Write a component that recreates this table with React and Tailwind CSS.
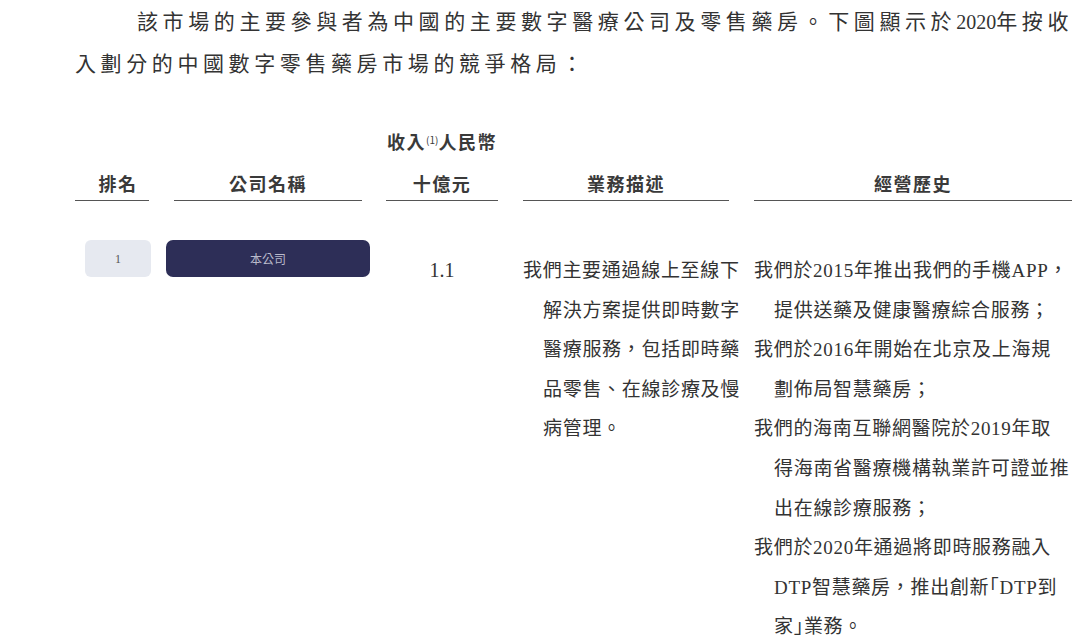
const serif = "font-['Liberation_Serif','Noto_Sans_CJK_TC',serif]";
const sans = "font-['Noto_Sans_CJK_TC','Noto_Sans',sans-serif]";

const Num = ({ children }) => (
  <span className="font-['Liberation_Serif',serif] text-[20px] tracking-normal">{children}</span>
);

// half-width corner bracket, like the printed original
const Br = ({ children }) => (
  <span className="[font-feature-settings:'halt']">{children}</span>
);

const descLines = [
  "我們主要通過線上至線下",
  "解決方案提供即時數字",
  "醫療服務，包括即時藥",
  "品零售、在線診療及慢",
  "病管理。",
];

const historyLines = [
  { text: "我們於2015年推出我們的手機APP，", indent: false },
  { text: "提供送藥及健康醫療綜合服務；", indent: true },
  { text: "我們於2016年開始在北京及上海規", indent: false },
  { text: "劃佈局智慧藥房；", indent: true },
  { text: "我們的海南互聯網醫院於2019年取", indent: false },
  { text: "得海南省醫療機構執業許可證並推", indent: true },
  { text: "出在線診療服務；", indent: true },
  { text: "我們於2020年通過將即時服務融入", indent: false },
  { text: <>DTP智慧藥房，推出創新<Br>「</Br>DTP到</>, indent: true },
  { text: <>家<Br>」</Br>業務。</>, indent: true },
];

const HeadCell = ({ width, className = "", children }) => (
  <div className={`${width} ${className} border-b-[1.5px] border-[#555] text-center`}>
    {children}
  </div>
);

export default function App() {
  return (
    <div className="min-h-screen w-[1080px] bg-white text-[#333]">
      {/* intro paragraph */}
      <div className={`${serif} pt-[1px] text-[21px] leading-[42px] tracking-[4.6px] whitespace-nowrap`}>
        <p className="pl-[137px]">
          該市場的主要參與者為中國的主要數字醫療公司及零售藥房。下圖顯示於<Num>2020</Num>年按收
        </p>
        <p className="pl-[75px]">入劃分的中國數字零售藥房市場的競爭格局：</p>
      </div>

      {/* table header */}
      <div className={`${sans} mt-[43px] flex items-end pl-[75px] text-[18px] font-bold tracking-[1.5px] text-[#3a3a3a]`}>
        <HeadCell width="w-[74px]">
          <div className="pl-[12px] leading-[26px] pb-[4px]">排名</div>
        </HeadCell>
        <HeadCell width="w-[188px]" className="ml-[25px]">
          <div className="leading-[26px] pb-[4px]">公司名稱</div>
        </HeadCell>
        <div className="ml-[24px] w-[112px]">
          <div className="mb-[12px] text-center leading-[26px] whitespace-nowrap">
            收入<span className="relative top-[-5px] text-[10px] font-normal tracking-normal">(1)</span>人民幣
          </div>
          <HeadCell width="w-full">
            <div className="leading-[26px] pb-[4px]">十億元</div>
          </HeadCell>
        </div>
        <HeadCell width="w-[206px]" className="ml-[25px]">
          <div className="leading-[26px] pb-[4px]">業務描述</div>
        </HeadCell>
        <HeadCell width="w-[318px]" className="ml-[25px]">
          <div className="leading-[26px] pb-[4px]">經營歷史</div>
        </HeadCell>
      </div>

      {/* row 1 */}
      <div className="mt-[39px] flex items-start pl-[85px]">
        <div className="flex h-[37px] w-[66px] items-center justify-center rounded-[6px] bg-[#e6e9f0] font-['Liberation_Serif',serif] text-[12px] text-[#555]">
          1
        </div>
        <div className={`${sans} ml-[15px] flex h-[37px] w-[204px] items-center justify-center rounded-[7px] bg-[#2d2e57] text-[12px] text-[#b9bacb]`}>
          本公司
        </div>
        <div className="ml-[16px] mt-[11px] w-[112px] text-center font-['Liberation_Serif',serif] text-[20px] leading-[39.6px]">
          1.1
        </div>
        <div className={`${serif} ml-[25px] mt-[11px] w-[206px] text-[19px] leading-[39.6px] tracking-[0.7px] whitespace-nowrap`}>
          {descLines.map((line, i) => (
            <div key={i} className={i > 0 ? "pl-[20px]" : ""}>
              {line}
            </div>
          ))}
        </div>
        <div className={`${serif} ml-[25px] mt-[11px] w-[318px] text-[19px] leading-[39.6px] tracking-[0.7px] whitespace-nowrap`}>
          {historyLines.map((line, i) => (
            <div key={i} className={line.indent ? "pl-[20px]" : ""}>
              {line.text}
            </div>
          ))}
        </div>
      </div>
    </div>
  );
}
